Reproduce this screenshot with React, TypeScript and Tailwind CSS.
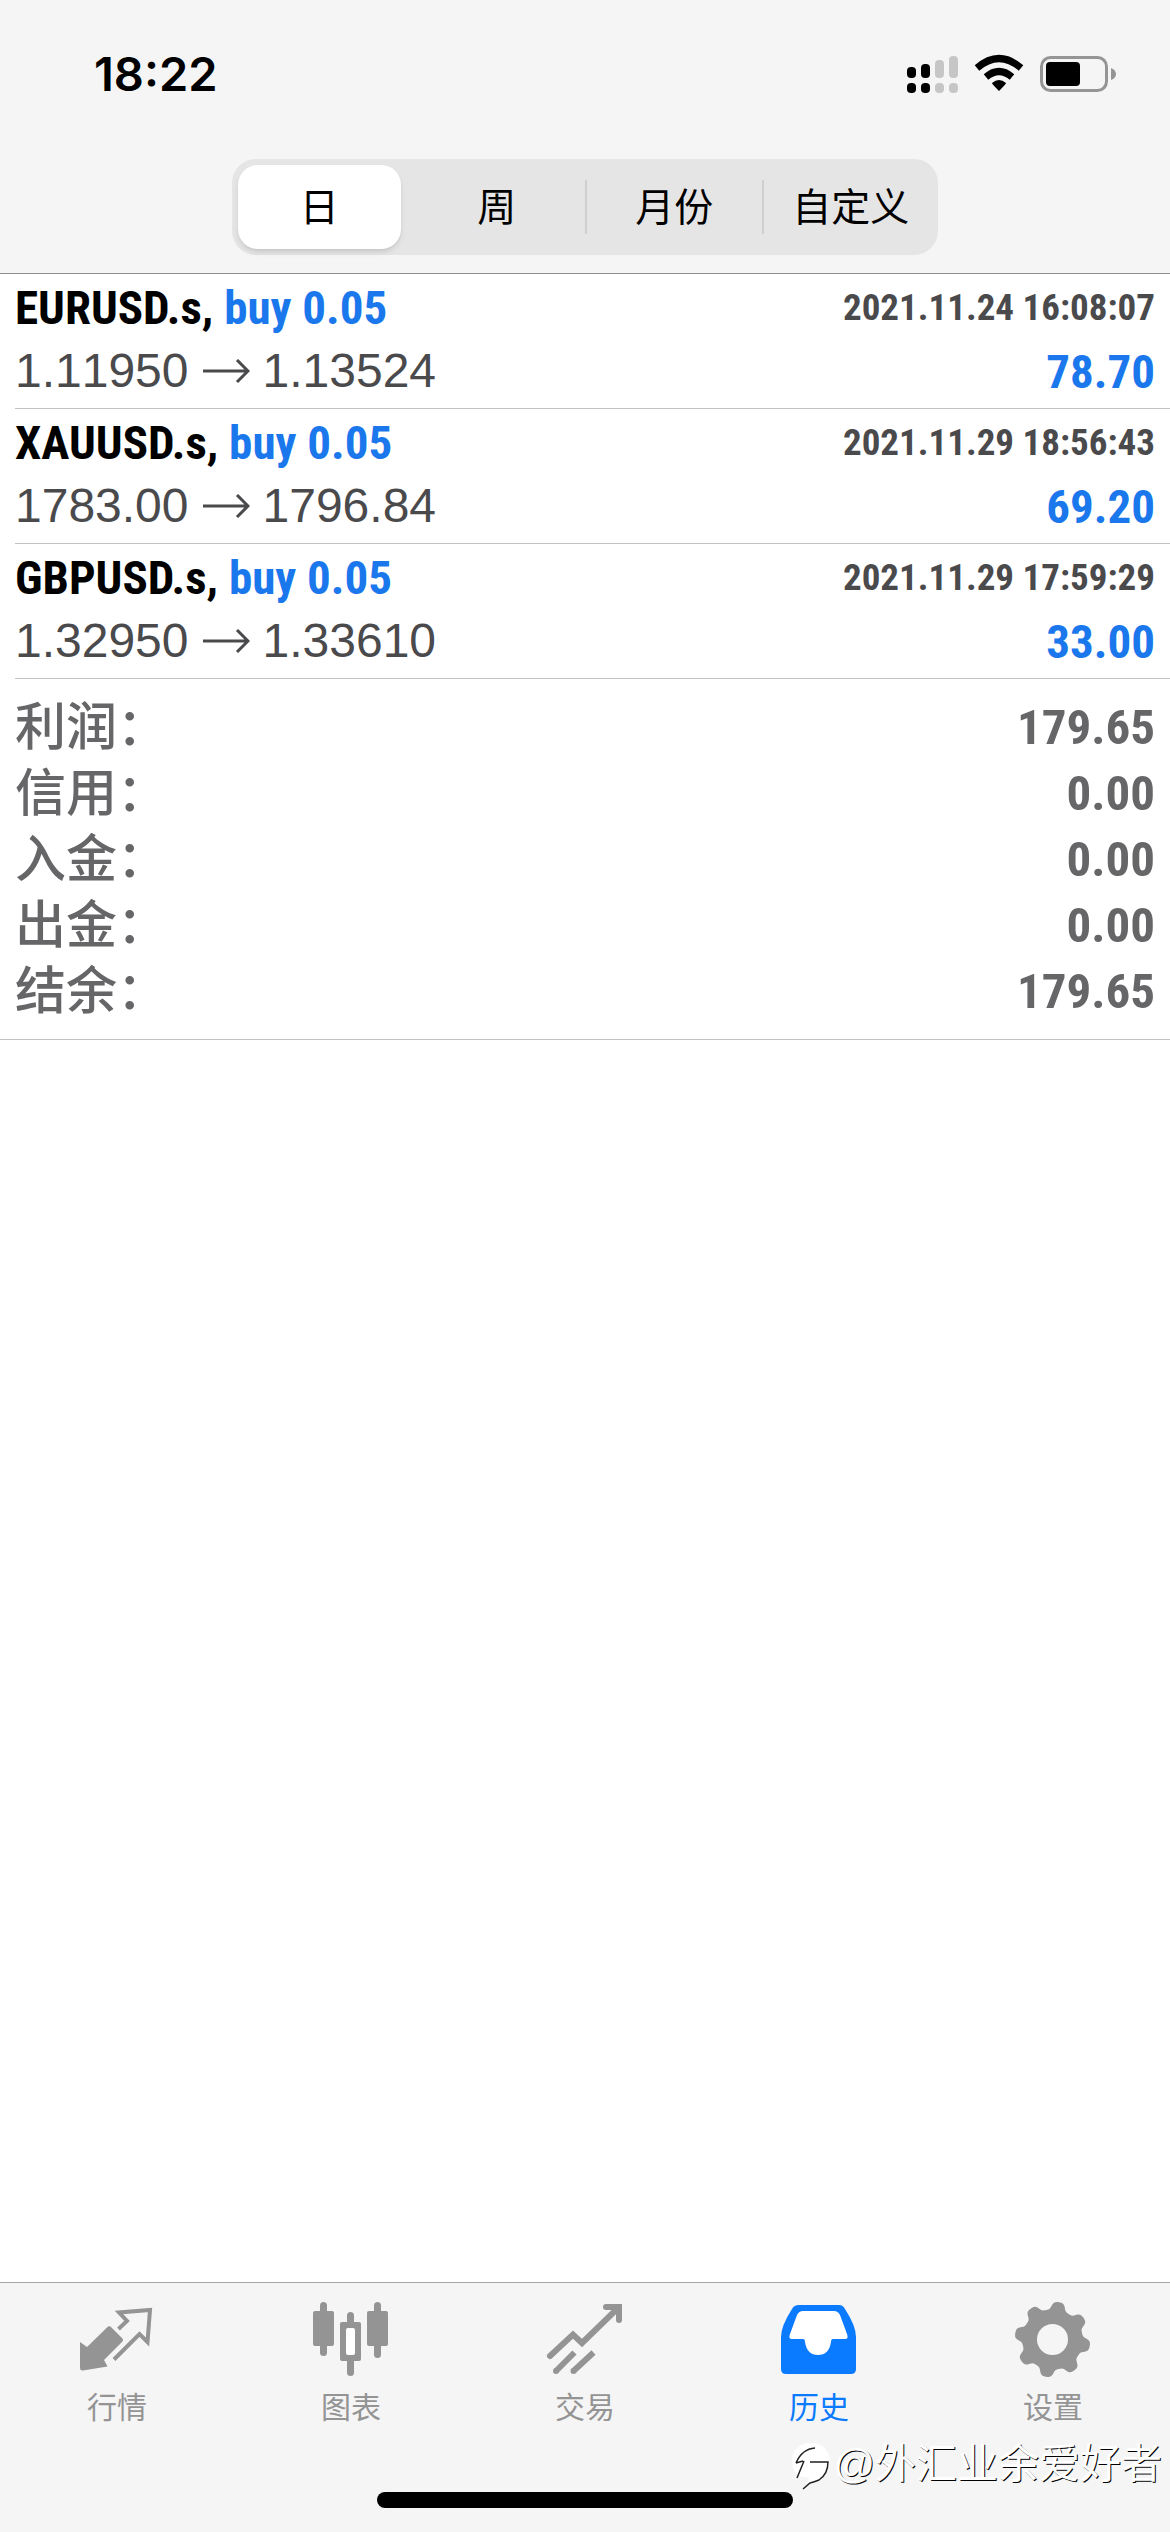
import React, { useState } from "react";
import clsx from "clsx";

const ranges = ["日", "周", "月份", "自定义"];

const deals = [
  {
    symbol: "EURUSD.s",
    side: "buy 0.05",
    open: "1.11950",
    close: "1.13524",
    time: "2021.11.24 16:08:07",
    profit: "78.70",
  },
  {
    symbol: "XAUUSD.s",
    side: "buy 0.05",
    open: "1783.00",
    close: "1796.84",
    time: "2021.11.29 18:56:43",
    profit: "69.20",
  },
  {
    symbol: "GBPUSD.s",
    side: "buy 0.05",
    open: "1.32950",
    close: "1.33610",
    time: "2021.11.29 17:59:29",
    profit: "33.00",
  },
];

const totals = [
  { label: "利润：", value: "179.65" },
  { label: "信用：", value: "0.00" },
  { label: "入金：", value: "0.00" },
  { label: "出金：", value: "0.00" },
  { label: "结余：", value: "179.65" },
];

// eight rounded teeth, turned ten degrees
const gearPath =
  Array.from({ length: 180 }, (_, i) => {
    const a = (i * 2 * Math.PI) / 180;
    const wave = Math.tanh(1.8 * Math.cos(8 * (a - Math.PI / 18)));
    const r = 34 + 4 * wave;
    const x = (39.5 + r * Math.cos(a)).toFixed(2);
    const y = (39.5 + r * Math.sin(a)).toFixed(2);
    return `${i ? "L" : "M"}${x} ${y}`;
  }).join("") + "Z M55 39.5a15.5 15.5 0 1 0 -31 0a15.5 15.5 0 1 0 31 0Z";

function QuotesIcon() {
  return (
    <svg viewBox="0 0 80 80" className="size-20">
      <path
        d="M3 42L10 47L30 27.500Q32 25 34.500 27.500L45 38Q47 40 45 42L27 60L30.500 66.500L6 70.500Q3 71 3 68Z"
        fill="currentColor"
      />
      <path
        d="M41.500 29L50 21L42 12.500L73 10L70.500 42L62.500 34L37 59.500"
        fill="none"
        stroke="currentColor"
        strokeWidth="4"
      />
    </svg>
  );
}

function ChartIcon() {
  return (
    <svg viewBox="0 0 80 80" className="size-20" fill="currentColor">
      <rect x="9" y="2" width="7" height="54" rx="3.5" />
      <rect x="2" y="11" width="21" height="35" rx="2" />
      <rect x="36" y="12" width="7" height="14" rx="3.5" />
      <rect x="36" y="56" width="7" height="20" rx="3.5" />
      <rect x="29" y="22" width="21" height="39" rx="2" />
      <rect x="35" y="28" width="9" height="27" rx="2" fill="#fff" />
      <rect x="63" y="2" width="7" height="56" rx="3.5" />
      <rect x="56" y="11" width="21" height="35" rx="2" />
    </svg>
  );
}

function TradeIcon() {
  return (
    <svg viewBox="0 0 80 80" className="size-20">
      <g fill="none" stroke="currentColor" strokeWidth="6">
        <path
          d="M5 56L28 34.500L37 43L73 8M61 7H74V20"
          strokeLinecap="round"
        />
        <path d="M11 71L29.500 52.500M28.500 71L48.500 52.500" />
      </g>
      <circle cx="11" cy="71" r="3" fill="currentColor" />
      <circle cx="28.500" cy="71" r="3" fill="currentColor" />
    </svg>
  );
}

function HistoryIcon() {
  return (
    <svg viewBox="0 0 80 80" className="size-20">
      <path
        d="M20 5H60Q64 5 66 9Q77 26 77 37V69Q77 74 72 74H7Q2 74 2 69V37Q2 26 13 9Q15 5 20 5Z"
        fill="currentColor"
      />
      <path
        d="M24 11H55Q59 11 61 15L68 34Q70 39 66 39H54Q52 39 52 42Q50 55 39 55Q28 55 26 42Q26 39 24 39H13Q9 39 11 34L18 15Q20 11 24 11Z"
        fill="#fff"
      />
    </svg>
  );
}

function SettingsIcon() {
  return (
    <svg viewBox="0 0 80 80" className="size-20">
      <path d={gearPath} fill="currentColor" fillRule="evenodd" />
    </svg>
  );
}

const tabs = [
  { name: "行情", Icon: QuotesIcon },
  { name: "图表", Icon: ChartIcon },
  { name: "交易", Icon: TradeIcon },
  { name: "历史", Icon: HistoryIcon },
  { name: "设置", Icon: SettingsIcon },
];

function StatusIcons() {
  return (
    <svg viewBox="0 0 212 40" className="h-10 w-[212px]">
      <g>
        <rect x="2" y="13" width="9" height="11" rx="4" />
        <rect x="2" y="29" width="9" height="10" rx="4" />
        <rect x="16" y="10" width="9" height="14" rx="4" />
        <rect x="16" y="29" width="9" height="10" rx="4" />
      </g>
      <g fill="#c6c6c6">
        <rect x="30" y="6" width="9" height="18" rx="4" />
        <rect x="30" y="29" width="9" height="10" rx="4" />
        <rect x="44" y="2" width="9" height="22" rx="4" />
        <rect x="44" y="29" width="9" height="10" rx="4" />
      </g>
      <g fill="none" stroke="#000" strokeWidth="7">
        <path d="M72 14Q94 -5 116 14" />
        <path d="M81 23Q94 12 107 23" />
      </g>
      <path d="M87 29Q94 23 101 29Q101 30 94 37Q87 30 87 29Z" />
      <rect
        x="136.500"
        y="3.500"
        width="65"
        height="33"
        rx="9"
        fill="none"
        stroke="#959595"
        strokeWidth="3"
      />
      <rect x="141" y="8" width="34" height="24" rx="4" />
      <path d="M206 14Q211 16 211 20Q211 24 206 26Z" fill="#959595" />
    </svg>
  );
}

export default function App() {
  const [range, setRange] = useState("日");
  const [tab, setTab] = useState("历史");

  return (
    <main className="relative flex flex-col min-h-screen bg-white font-['Liberation_Sans','Noto_Sans_CJK_SC',sans-serif]">
      <header className="bg-[#f5f5f5] border-b border-[#8e8e8e] pb-[18px]">
        <div className="flex items-center justify-between pt-11 pl-[94px] pr-[53px]">
          <div className="font-['Inter',sans-serif] font-semibold text-[47px] leading-[60px]">
            18:22
          </div>
          <StatusIcons />
        </div>
        <div className="grid grid-cols-4 max-w-[706px] h-24 mx-auto mt-[55px] rounded-3xl bg-[#e5e5e6]">
          {ranges.map((item, i) => (
            <button
              key={item}
              type="button"
              aria-pressed={item === range}
              onClick={() => setRange(item)}
              className={clsx(
                "text-[39px] leading-none",
                item === range && "bg-white rounded-[20px] m-[6px] mr-2 shadow-md",
                i > 1 && item !== range && "my-[21px] border-l-2 border-[#cfcfd1]"
              )}
            >
              {item}
            </button>
          ))}
        </div>
      </header>

      <section className="pl-[15px]">
        {deals.map((deal) => (
          <article
            key={deal.symbol}
            className="flex flex-col h-[135px] pt-1 pr-[15px] border-b border-[#c3c3c5]"
          >
            <div className="flex items-center justify-between h-[58px] font-['Roboto_Condensed',sans-serif] font-bold">
              <h2 className="text-[47px] leading-none">
                {deal.symbol},{" "}
                <span className="text-[#1a77ec]">{deal.side}</span>
              </h2>
              <time className="text-[37px] leading-none text-[#4a4a4d]">
                {deal.time}
              </time>
            </div>
            <div className="flex items-center justify-between h-[70px]">
              <div className="flex items-center gap-[13px] text-5xl text-[#4a4a4d] [font-kerning:none]">
                <span>{deal.open}</span>
                <svg viewBox="0 0 48 24" className="w-12 h-6">
                  <path
                    d="M1 12H46M35 1L46 12L35 23"
                    fill="none"
                    stroke="currentColor"
                    strokeWidth="3"
                  />
                </svg>
                <span>{deal.close}</span>
              </div>
              <div className="font-['Roboto_Condensed',sans-serif] font-bold text-[47px] leading-none text-[#1a77ec]">
                {deal.profit}
              </div>
            </div>
          </article>
        ))}
      </section>

      <dl className="py-[15px] px-[15px] border-b border-[#c3c3c5] text-[#666668]">
        {totals.map((row) => (
          <div key={row.label} className="flex items-center justify-between h-[66px]">
            <dt className="font-medium text-[51px] leading-none">{row.label}</dt>
            <dd className="font-['Roboto_Condensed',sans-serif] font-bold text-[49px] leading-none">
              {row.value}
            </dd>
          </div>
        ))}
      </dl>

      <footer className="relative mt-auto bg-[#f5f5f5] border-t border-[#a5a5a7] pt-[17px] pb-6">
        <nav className="grid grid-cols-5">
          {tabs.map(({ name, Icon }) => (
            <button
              key={name}
              type="button"
              onClick={() => setTab(name)}
              className={clsx(
                "flex flex-col items-center",
                name === tab ? "text-[#0a7aff]" : "text-[#949494]"
              )}
            >
              <Icon />
              <span className="text-[30px] leading-[56px]">{name}</span>
            </button>
          ))}
        </nav>
        <div className="w-[416px] h-4 mx-auto mt-14 rounded-full bg-black"></div>
        <div className="absolute right-2 bottom-[42px] flex items-center text-white">
          <svg viewBox="0 0 44 52" className="w-11 h-[52px]">
            <path
              d="M22 5C34 5 41 13 41 24C41 36 31 41 18 47L20 39C10 41 3 34 3 23C3 12 11 5 22 5Z"
              fill="#fff"
            />
            <path
              d="M7 25Q13 11 26 10M7 25L14 23M21 24H39Q39 36 30 42Q25 44 21 45L14 51M15 23L8 40"
              fill="none"
              stroke="#222"
              strokeWidth="1.5"
            />
          </svg>
          <span className="text-[41px] leading-[52px] [text-shadow:1px_1px_0_#000]">
            @外汇业余爱好者
          </span>
        </div>
      </footer>
    </main>
  );
}
